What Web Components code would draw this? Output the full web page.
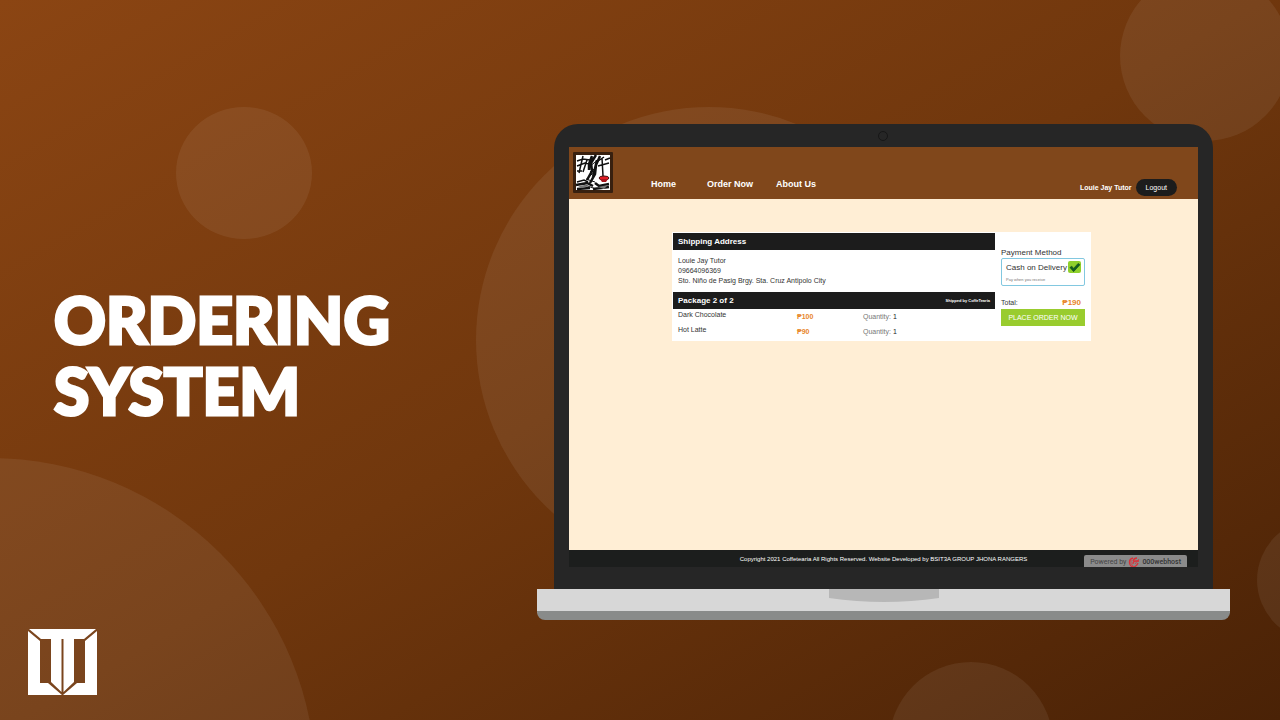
<!DOCTYPE html>
<html lang="en">
<head>
<meta charset="utf-8">
<meta name="viewport" content="width=device-width, initial-scale=1">
<title>Ordering System</title>
<style>
  body { margin: 0; font-family: "Liberation Sans", Arial, sans-serif; background: #6b340c; }
</style>
</head>
<body>
<promo-stage>
  <promo-title slot="title">Ordering System</promo-title>
  <brand-mark slot="brand"></brand-mark>
  <laptop-frame>
    <shop-page>
      <shop-header slot="header" user="Louie Jay Tutor"></shop-header>
      <order-card></order-card>
      <shop-footer slot="footer">Copyright 2021 Coffetearia All Rights Reserved. Website Developed by BSIT3A GROUP JHONA RANGERS</shop-footer>
    </shop-page>
  </laptop-frame>
</promo-stage>

<script>
const define = (name, html) => customElements.define(name, class extends HTMLElement {
  constructor() {
    super();
    const t = document.createElement('template');
    t.innerHTML = html;
    this.attachShadow({ mode: 'open' }).appendChild(t.content.cloneNode(true));
  }
  connectedCallback() {
    const user = this.shadowRoot.querySelector('[data-user]');
    if (user) user.textContent = this.getAttribute('user');
  }
});

define('promo-stage', `
<style>
  :host { display: grid; grid-template-columns: minmax(0, 537fr) minmax(0, 743fr); min-height: 100vh; position: relative; overflow: hidden;
    background: linear-gradient(150deg, #8b4513 0%, #70370d 50%, #4a2206 100%); }
  .backdrop { position: absolute; inset: 0; width: 100%; height: 100%; }
  .left { position: relative; display: grid; grid-template-rows: 1fr auto 1fr; padding-left: 28px; }
  .title { grid-row: 2; padding: 0 0 10px 26px; }
  .brand { grid-row: 3; align-self: end; padding-bottom: 25px; }
  .right { position: relative; align-self: center; padding: 24px 50px 0 0; }
</style>
<svg class="backdrop" viewBox="0 0 1280 720" preserveAspectRatio="xMidYMid slice" fill="#fff" fill-opacity=".065" aria-hidden="true">
  <ellipse cx="244" cy="173" rx="68" ry="66"/>
  <circle cx="1205" cy="56" r="85"/>
  <circle cx="709" cy="340" r="233"/>
  <circle cx="-10" cy="784" r="326"/>
  <circle cx="971" cy="744" r="82"/>
  <circle cx="1318" cy="580" r="61"/>
</svg>
<div class="left"><div class="title"><slot name="title"></slot></div><div class="brand"><slot name="brand"></slot></div></div>
<main class="right"><slot></slot></main>`);

define('promo-title', `
<style>
  :host { display: block; }
  h1 { margin: 0; max-width: 400px; font: 900 64px/71px Lato, "Open Sans", sans-serif; color: #fff; -webkit-text-stroke: 3px #fff; text-transform: uppercase; }
</style>
<h1><slot></slot></h1>`);

define('brand-mark', `
<style>:host { display: block; } svg { display: block; }</style>
<svg width="69" height="66" viewBox="0 0 69 66" role="img" aria-label="Studio mark">
  <path fill="#fff" d="M1 0H68L56 10H46V53L35.500 63V10H33.500V63L23 53V10H13Z"/>
  <path fill="#fff" d="M0 2L12 12V54H20L34 66H0Z"/>
  <path fill="#fff" d="M69 2L57 12V54H49L35 66H69Z"/>
</svg>`);

define('laptop-frame', `
<style>
  :host { display: block; }
  .lid { position: relative; margin: 0 17px; padding: 23px 15px 22px; background: #262626; border-radius: 24px 24px 0 0; }
  .cam { position: absolute; left: 50%; top: 7px; width: 8px; height: 8px; margin-left: -6px; border: 1px solid #171717; border-radius: 50%; }
  .base { height: 22px; background: #d7d7d7; border-bottom: 9px solid #898b8a; border-radius: 0 0 8px 8px; }
  .base svg { display: block; margin: 0 auto; }
</style>
<div class="lid"><span class="cam"></span><slot></slot></div>
<div class="base"><svg width="110" height="13" viewBox="0 0 110 13" aria-hidden="true"><path fill="#b7b7b7" d="M0 0H110V9Q55 17 0 9Z"/></svg></div>`);

define('shop-page', `
<style>
  :host { display: block; }
  .body { min-height: 318px; padding: 33px 107px 0 103px; background: #ffeed5; }
</style>
<slot name="header"></slot>
<div class="body"><slot></slot></div>
<slot name="footer"></slot>`);

define('shop-header', `
<style>
  :host { display: flex; align-items: flex-end; height: 52px; padding: 0 21px 0 4px; box-sizing: border-box; background: #80471b; color: #fff; }
  .logo { align-self: flex-start; margin-top: 5px; }
  .logo svg { display: block; }
  nav { display: flex; gap: 31px; margin: 0 auto 9px 38px; font: bold 9px/12px "Liberation Sans", Arial, sans-serif; }
  nav a:last-child { margin-left: -8px; }
  a { color: inherit; text-decoration: none; }
  .account { display: flex; align-items: center; gap: 4px; margin-bottom: 3px; font: bold 7px/10px "Liberation Sans", Arial, sans-serif; }
  button { border: 0; padding: 0 10px; height: 17px; border-radius: 9px; background: #1c1c1c; color: #fff; font: 7px/17px "Liberation Sans", Arial, sans-serif; }
</style>
<a class="logo" href="#" aria-label="Coffetearia">
  <svg width="40" height="41" viewBox="0 0 40 41">
    <rect width="40" height="41" rx="1" fill="#38200f"/>
    <rect x="3" y="3" width="34" height="35" fill="#fff"/>
    <g fill="none" stroke="#111">
      <path stroke-width="1.500" d="M4 9L10 7L17 8M4 14L12 11L18 12M10 4L6 21M14 8L10 20M4 19H9M29 6L30 24M25 14L36 11M32 8L37 6M25 9L31 5M4 30L11 28L15 30"/>
      <path stroke-width="2.500" d="M23 3L18 11L19 19L14 28M27 4L23 13L22 22L17 31M19 4L16 12L16 18M24 8L20 25M3 33L14 31L20 34M4 37L17 36M20 37L36 35M22 31L26 34L36 32"/>
      <path stroke-width="1" d="M17 14L25 8M17 20L24 15M15 25L22 20M9 32L23 37M13 27L22 30"/>
    </g>
    <path fill="#777" d="M5 34L12 33L17 34L9 36ZM25 35L35 33L31 37Z"/>
    <ellipse cx="31" cy="26" rx="5" ry="2" fill="#e01b24" stroke="#421010"/>
    <path fill="#a8141c" d="M27 27H35L33 30H29Z"/>
  </svg>
</a>
<nav aria-label="Main"><a href="#">Home</a><a href="#">Order Now</a><a href="#">About Us</a></nav>
<div class="account"><span data-user></span><button type="button">Logout</button></div>`);

define('order-card', `
<style>
  :host { display: grid; grid-template-columns: minmax(0, 323fr) minmax(0, 96fr); min-height: 109px; background: #fff; font: 7px/10px "Liberation Sans", Arial, sans-serif; color: #333; }
  h2 { display: flex; justify-content: space-between; align-items: center; margin: 0; padding: 0 5px; height: 17px; background: #1c1c1c; color: #fff; font-size: 8px; line-height: 17px; }
  h2 small { font-size: 4px; }
  .list { padding: 1px 0 0 1px; }
  address { font-style: normal; padding: 6px 5px; }
  table { width: 100%; border-collapse: collapse; table-layout: fixed; }
  td { padding: 3px 0 2px; height: 10px; vertical-align: top; line-height: 10px; }
  td:first-child { width: 119px; padding: 1px 0 4px 5px; }
  td:nth-child(2) { width: 66px; }
  .price { color: #e8862a; font-weight: bold; }
  .qty { color: #777; }
  .qty b { color: #222; font-weight: normal; }
  .pay { padding: 15px 6px 0; }
  h3 { margin: 0; font: 8px/11px "Liberation Sans", Arial, sans-serif; color: #333; white-space: nowrap; }
  .method { display: grid; grid-template-columns: 1fr 13px; box-sizing: border-box; height: 28px; border: 1px solid #82c8e0; border-radius: 2px; padding: 2px 3px 2px 4px; }
  label { font-size: 8px; line-height: 14px; white-space: nowrap; }
  input { appearance: none; margin: 0; width: 13px; height: 12px; border-radius: 2px; background: #8fd02c url("data:image/svg+xml,%3Csvg xmlns='http://www.w3.org/2000/svg' viewBox='0 0 14 12'%3E%3Cpath d='M2 6L4 4.500L6 7L11 1.500L13 3L6 10.500Z' fill='%23125f22' stroke='%230b3f14' stroke-width='.6'/%3E%3C/svg%3E") center / contain no-repeat; }
  .method small { font-size: 4px; line-height: 6px; color: #777; padding-top: 2px; }
  .total { display: flex; justify-content: space-between; padding: 12px 4px 1px 0; }
  .total .price { font-size: 8px; }
  button { display: block; width: 100%; height: 17px; border: 0; padding: 0; background: #99cc2e; color: #fff; font: 7px/17px "Liberation Sans", Arial, sans-serif; white-space: nowrap; }
</style>
<section class="list">
  <h2>Shipping Address</h2>
  <address>Louie Jay Tutor<br>09664096369<br>Sto. Niño de Pasig Brgy. Sta. Cruz Antipolo City</address>
  <h2>Package 2 of 2 <small>Shipped by CoffeTearia</small></h2>
  <table>
    <tr><td>Dark Chocolate</td><td class="price">₱100</td><td class="qty">Quantity: <b>1</b></td></tr>
    <tr><td>Hot Latte</td><td class="price">₱90</td><td class="qty">Quantity: <b>1</b></td></tr>
  </table>
</section>
<section class="pay">
  <h3>Payment Method</h3>
  <div class="method">
    <label for="cod">Cash on Delivery</label><input id="cod" type="checkbox" checked>
    <small>Pay when you receive</small>
  </div>
  <div class="total"><span>Total:</span><span class="price">₱190</span></div>
  <button type="button">PLACE ORDER NOW</button>
</section>`);

define('shop-footer', `
<style>
  :host { display: block; position: relative; height: 17px; overflow: hidden; background: #1c1e1d; color: #fff; text-align: center; font: 6px/18px "Liberation Sans", Arial, sans-serif; }
  a { position: absolute; right: 11px; top: 5px; display: flex; align-items: center; gap: 2px; padding: 0 6px; height: 14px; border-radius: 2px; background: #8b8b8b; color: #444; font: 7px/14px Roboto, sans-serif; text-decoration: none; }
  b { font-weight: 500; color: #333; }
</style>
<slot></slot>
<a href="#">Powered by <svg width="12" height="11" viewBox="0 0 12 11" fill="none" stroke="#dc3038" aria-hidden="true"><path stroke-width="1.300" d="M5 1Q1 2 1.500 6Q2 10 6 10Q9 9 10 6M5 7Q5 4 8 4H11M9 1Q6 1 5 4"/><path stroke-width=".8" d="M3 3Q2 7 5 9M7 7L11 2"/></svg><b>000webhost</b></a>`);
</script>
</body>
</html>
